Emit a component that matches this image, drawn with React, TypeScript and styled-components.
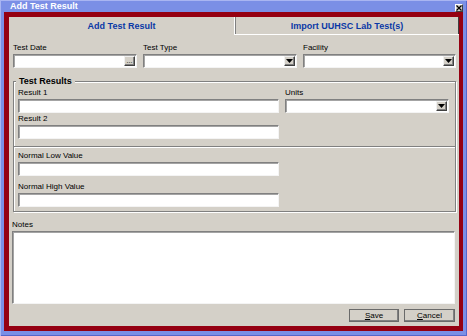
import React from "react";
import styled, { createGlobalStyle } from "styled-components";

const GlobalStyle = createGlobalStyle`
  * { box-sizing: border-box; }
  body {
    margin: 0;
    font-family: "Liberation Sans", Arial, sans-serif;
  }
`;

const Window = styled.div`
  width: 467px;
  height: 336px;
  background: #7b8fe6;
  padding: 0 4px 5px 4px;
  display: flex;
  flex-direction: column;
  box-shadow: inset 1px 1px #a9b5f2, inset -1px -1px #5566cc;
`;

const TitleBar = styled.div`
  height: 12px;
  display: flex;
  align-items: flex-start;
  justify-content: space-between;
  padding-left: 6px;
`;

const TitleText = styled.span`
  color: #fff;
  font-size: 9px;
  font-weight: bold;
  line-height: 12px;
`;

const CloseBox = styled.div`
  width: 8px;
  height: 8px;
  margin-top: 4px;
  background: #d4d0c8;
  border: 1px solid;
  border-color: #fff #404040 #404040 #fff;
  display: flex;
  align-items: center;
  justify-content: center;
`;

const Frame = styled.div`
  flex: 1;
  border: 5px solid #950012;
  border-right-width: 4px;
  background: #d4d0c8;
  display: flex;
  flex-direction: column;
`;

const Tabs = styled.div`
  display: flex;
  height: 18px;
`;

const Tab = styled.div<{ $active?: boolean }>`
  width: ${(p) => (p.$active ? "225px" : "auto")};
  flex: ${(p) => (p.$active ? "none" : "1")};
  display: flex;
  align-items: center;
  justify-content: center;
  color: #0a38a6;
  font-size: 9px;
  font-weight: bold;
  line-height: 10px;
  border-left: ${(p) => (p.$active ? "none" : "1px solid #fff")};
  border-bottom: ${(p) => (p.$active ? "none" : "1px solid #fff")};
  box-shadow: ${(p) =>
    p.$active ? "none" : "inset 1px 0 #808080, inset -1px 0 #404040"};
`;

const Body = styled.div`
  display: flex;
  flex-direction: column;
  padding: 8px 4px 0 3px;
`;

const TopRow = styled.div`
  display: grid;
  grid-template-columns: 124px 154px 153px;
  column-gap: 6px;
  margin-left: 1px;
`;

const Field = styled.div<{ $top?: number }>`
  display: flex;
  flex-direction: column;
  margin-top: ${(p) => p.$top ?? 0}px;
`;

const Label = styled.label`
  display: block;
  height: 10px;
  font-size: 8px;
  line-height: 10px;
  color: #000;
  white-space: nowrap;
`;

const Box = styled.div<{ $h?: number }>`
  height: ${(p) => p.$h ?? 14}px;
  margin-top: 1px;
  background: #fff;
  border: 1px solid;
  border-color: #808080 #f4f4f4 #f4f4f4 #808080;
  box-shadow: inset 1px 1px #a4a4a4;
  display: flex;
  align-items: center;
  justify-content: flex-end;
  padding-right: 1px;
`;

const SmallButton = styled.div`
  width: 11px;
  height: 10px;
  background: #d4d0c8;
  border: 1px solid;
  border-color: #f0f0f0 #404040 #404040 #f0f0f0;
  box-shadow: inset -1px -1px #808080;
  display: flex;
  align-items: center;
  justify-content: center;
  font-size: 7px;
  line-height: 6px;
  color: #000;
`;

const Group = styled.fieldset`
  margin: 8px 0 0 1px;
  padding: 0;
  width: 443px;
  min-width: 0;
  border: 1px solid #808080;
  box-shadow: inset 1px 1px #fff, 1px 1px #fff;
`;

const Legend = styled.legend`
  margin-left: 2px;
  padding: 0 3px;
  background: #d4d0c8;
  font-size: 9px;
  font-weight: bold;
  line-height: 10px;
  color: #000;
`;

const ResultGrid = styled.div`
  display: grid;
  grid-template-columns: 261px 164px;
  column-gap: 6px;
  row-gap: 1px;
  padding: 2px 6px 7px 4px;
`;

const Divider = styled.div`
  height: 2px;
  border-top: 1px solid #808080;
  border-bottom: 1px solid #fff;
`;

const RangeList = styled.div`
  display: flex;
  flex-direction: column;
  gap: 6px;
  width: 265px;
  padding: 3px 0 4px 4px;
`;

const Buttons = styled.div`
  display: flex;
  justify-content: flex-end;
  gap: 5px;
  margin-top: 5px;
`;

const Button = styled.div<{ $w: number }>`
  width: ${(p) => p.$w}px;
  height: 13px;
  background: #d4d0c8;
  border: 1px solid;
  border-color: #fff #404040 #404040 #fff;
  box-shadow: inset -1px -1px #808080, 0 0 0 0 transparent;
  outline: 1px solid #6a6a6a;
  outline-offset: -1px;
  display: flex;
  align-items: center;
  justify-content: center;
  font-size: 8px;
  color: #000;
`;

const Arrow = () => (
  <svg width="7" height="4" viewBox="0 0 7 4">
    <path d="M0 0h7L3.5 4z" fill="#000" />
  </svg>
);

const Select = ({ label }: { label: string }) => (
  <Field>
    <Label>{label}</Label>
    <Box>
      <SmallButton>
        <Arrow />
      </SmallButton>
    </Box>
  </Field>
);

const Text = ({ label, top }: { label: string; top?: number }) => (
  <Field $top={top}>
    <Label>{label}</Label>
    <Box />
  </Field>
);

export default function App() {
  return (
    <>
      <GlobalStyle />
      <Window>
        <TitleBar>
          <TitleText>Add Test Result</TitleText>
          <CloseBox>
            <svg width="6" height="6" viewBox="0 0 6 6">
              <path d="M0.5 0.5L5.5 5.5M5.5 0.5L0.5 5.5" stroke="#000" strokeWidth="1.2" />
            </svg>
          </CloseBox>
        </TitleBar>
        <Frame>
          <Tabs>
            <Tab $active>Add Test Result</Tab>
            <Tab>Import UUHSC Lab Test(s)</Tab>
          </Tabs>
          <Body>
            <TopRow>
              <Field>
                <Label>Test Date</Label>
                <Box>
                  <SmallButton>...</SmallButton>
                </Box>
              </Field>
              <Select label="Test Type" />
              <Select label="Facility" />
            </TopRow>

            <Group>
              <Legend>Test Results</Legend>
              <ResultGrid>
                <Text label="Result 1" />
                <Select label="Units" />
                <Text label="Result 2" />
              </ResultGrid>
              <Divider />
              <RangeList>
                <Text label="Normal Low Value" />
                <Text label="Normal High Value" />
              </RangeList>
            </Group>

            <Field $top={8}>
              <Label>Notes</Label>
              <Box $h={73} />
            </Field>

            <Buttons>
              <Button $w={50}>
                <span>
                  <u>S</u>ave
                </span>
              </Button>
              <Button $w={51}>
                <span>
                  <u>C</u>ancel
                </span>
              </Button>
            </Buttons>
          </Body>
        </Frame>
      </Window>
    </>
  );
}
